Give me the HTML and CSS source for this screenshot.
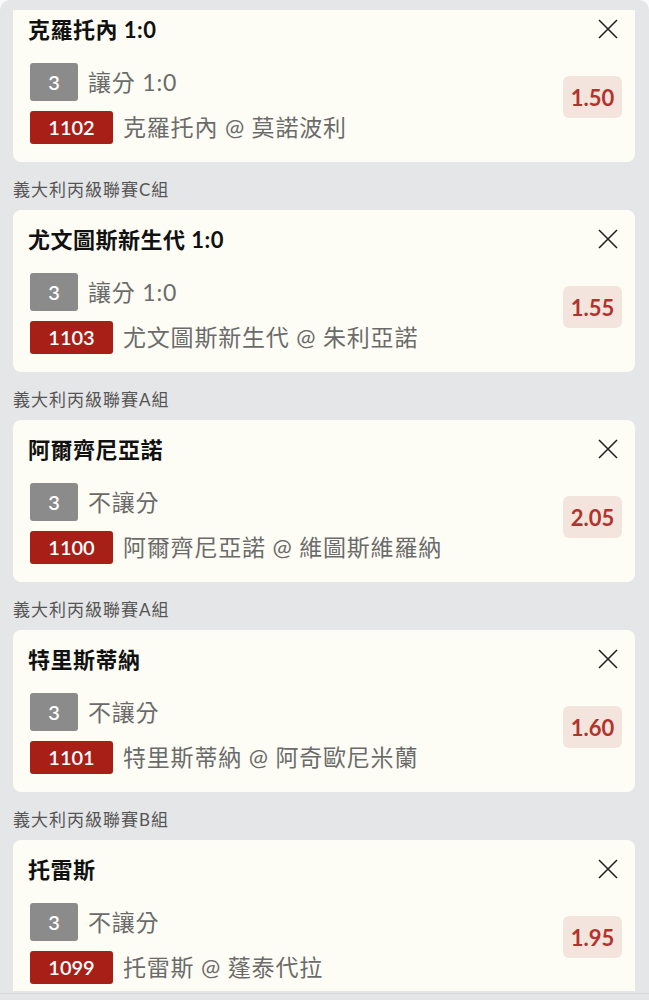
FILE: index.html
```html
<!DOCTYPE html>
<html lang="zh-Hant">
<head>
  <meta charset="UTF-8" />
  <meta name="viewport" content="width=device-width, initial-scale=1.0" />
  <title>投注單</title>
  <link rel="stylesheet" href="styles.css">
</head>
<body>
  <div class="sheet">
    <div class="sheet-top"></div>
    <div class="scroller">
      <div class="list">

        <div class="card">
          <div class="card-head">
            <span class="title">克羅托內 1:0</span>
            <svg class="close" viewBox="0 0 20 20"><path d="M1 1L19 19M19 1L1 19" /></svg>
          </div>
          <div class="card-body">
            <div class="rows">
              <div class="row"><span class="badge grey">3</span><span class="txt">讓分 1:0</span></div>
              <div class="row"><span class="badge red">1102</span><span class="txt">克羅托內 @ 莫諾波利</span></div>
            </div>
            <div class="price">1.50</div>
          </div>
        </div>

        <div class="league">義大利丙級聯賽C組</div>
        <div class="card">
          <div class="card-head">
            <span class="title">尤文圖斯新生代 1:0</span>
            <svg class="close" viewBox="0 0 20 20"><path d="M1 1L19 19M19 1L1 19" /></svg>
          </div>
          <div class="card-body">
            <div class="rows">
              <div class="row"><span class="badge grey">3</span><span class="txt">讓分 1:0</span></div>
              <div class="row"><span class="badge red">1103</span><span class="txt">尤文圖斯新生代 @ 朱利亞諾</span></div>
            </div>
            <div class="price">1.55</div>
          </div>
        </div>

        <div class="league">義大利丙級聯賽A組</div>
        <div class="card">
          <div class="card-head">
            <span class="title">阿爾齊尼亞諾</span>
            <svg class="close" viewBox="0 0 20 20"><path d="M1 1L19 19M19 1L1 19" /></svg>
          </div>
          <div class="card-body">
            <div class="rows">
              <div class="row"><span class="badge grey">3</span><span class="txt">不讓分</span></div>
              <div class="row"><span class="badge red">1100</span><span class="txt">阿爾齊尼亞諾 @ 維圖斯維羅納</span></div>
            </div>
            <div class="price">2.05</div>
          </div>
        </div>

        <div class="league">義大利丙級聯賽A組</div>
        <div class="card">
          <div class="card-head">
            <span class="title">特里斯蒂納</span>
            <svg class="close" viewBox="0 0 20 20"><path d="M1 1L19 19M19 1L1 19" /></svg>
          </div>
          <div class="card-body">
            <div class="rows">
              <div class="row"><span class="badge grey">3</span><span class="txt">不讓分</span></div>
              <div class="row"><span class="badge red">1101</span><span class="txt">特里斯蒂納 @ 阿奇歐尼米蘭</span></div>
            </div>
            <div class="price">1.60</div>
          </div>
        </div>

        <div class="league">義大利丙級聯賽B組</div>
        <div class="card">
          <div class="card-head">
            <span class="title">托雷斯</span>
            <svg class="close" viewBox="0 0 20 20"><path d="M1 1L19 19M19 1L1 19" /></svg>
          </div>
          <div class="card-body">
            <div class="rows">
              <div class="row"><span class="badge grey">3</span><span class="txt">不讓分</span></div>
              <div class="row"><span class="badge red">1099</span><span class="txt">托雷斯 @ 蓬泰代拉</span></div>
            </div>
            <div class="price">1.95</div>
          </div>
        </div>

      </div>
    </div>
    <div class="sheet-foot"></div>
  </div>
</body>
</html>
```

FILE: styles.css
```css
html, body { margin: 0; padding: 0; }
body {
  background: #fafafa;
  font-family: Lato, "Noto Sans CJK TC", sans-serif;
  color: #111;
}
.sheet {
  height: 1000px;
  display: flex;
  flex-direction: column;
  background: #e5e6e8;
  border-radius: 10px 10px 0 0;
  overflow: hidden;
}
.sheet-top { height: 10px; flex: none; }
.scroller { flex: 1; overflow: hidden; }
.sheet-foot {
  height: 9px;
  flex: none;
  box-sizing: border-box;
  padding-top: 2px;
}
.sheet-foot::before {
  content: "";
  display: block;
  height: 1px;
  background: #d6d7d9;
}
.list {
  margin-top: -10px;
  padding: 0 14px 0 13px;
}
.card {
  background: #fdfdf5;
  border-radius: 8px;
  padding: 16px 17px 16px 17px;
  height: 162px;
  box-sizing: border-box;
}
.card-head {
  display: flex;
  justify-content: space-between;
  align-items: center;
  height: 28px;
}
.title {
  font-size: 22px;
  font-weight: 700;
  line-height: 28px;
  letter-spacing: 0.5px;
  margin-left: -2px;
  color: #111;
}
.close {
  width: 20px;
  height: 20px;
  margin-top: -2px;
  stroke: #222;
  stroke-width: 1.6;
  fill: none;
}
.card-body {
  display: flex;
  justify-content: space-between;
  align-items: flex-start;
  margin-top: 19px;
}
.rows {
  display: flex;
  flex-direction: column;
  gap: 7px;
}
.row {
  display: flex;
  align-items: center;
  height: 38px;
}
.badge {
  display: flex;
  align-items: center;
  justify-content: center;
  color: #fff;
  font-size: 20px;
  font-weight: 600;
  border-radius: 3px;
  margin-right: 10px;
}
.badge.grey {
  background: #8b8b8b;
  width: 48px;
  height: 38px;
}
.badge.red {
  background: #a81f18;
  width: 83px;
  height: 33px;
}
.txt {
  font-size: 23px;
  letter-spacing: 0.8px;
  color: #6b6b6b;
  line-height: 38px;
}
.price {
  margin-top: 13px;
  margin-right: -4px;
  width: 59px;
  height: 42px;
  display: flex;
  align-items: center;
  justify-content: center;
  background: #f3e4de;
  border-radius: 6px;
  color: #b2332c;
  font-size: 22px;
  font-weight: 700;
}
.league {
  font-size: 17px;
  line-height: 22px;
  letter-spacing: 1px;
  color: #555;
  margin: 17px 0 9px 0;
}
```
